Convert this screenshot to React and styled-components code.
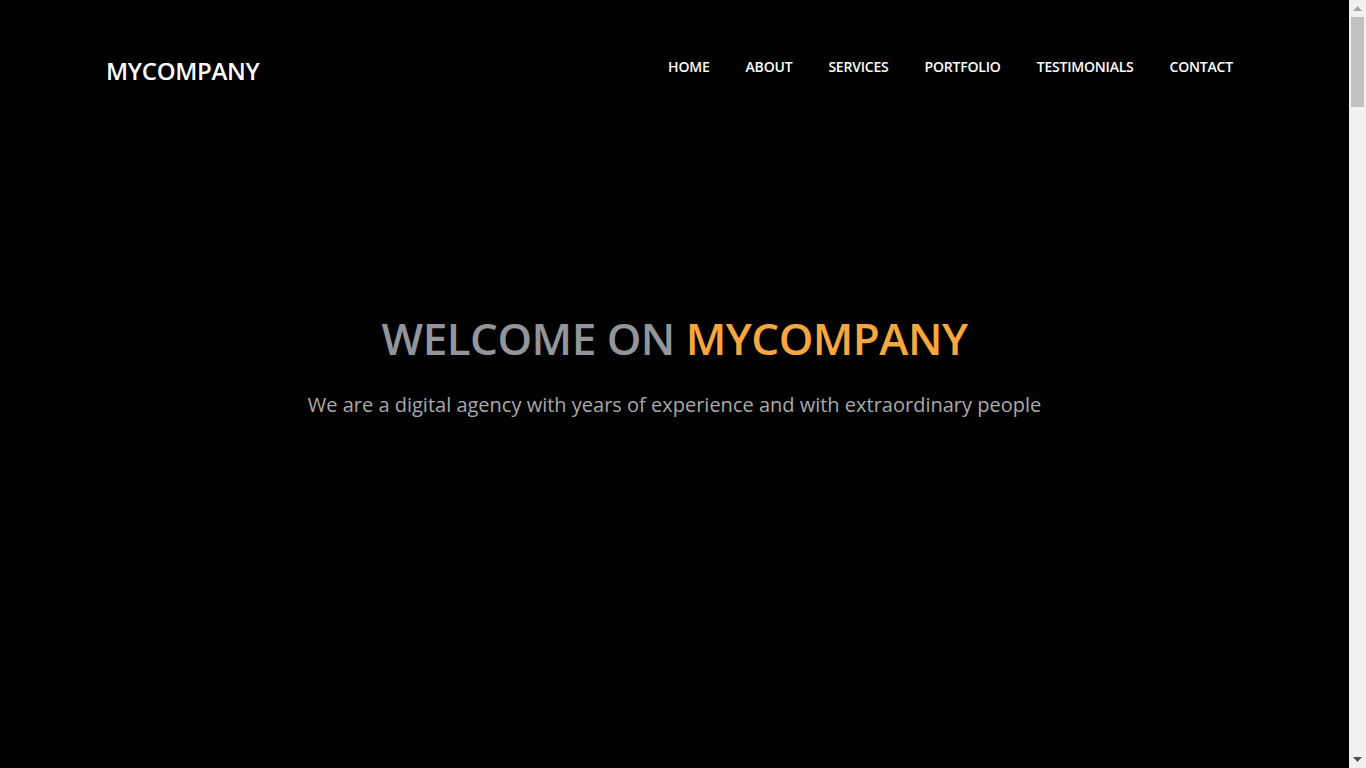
import styled, { createGlobalStyle } from "styled-components";

const GlobalStyle = createGlobalStyle`
  html, body {
    margin: 0;
    padding: 0;
    background: #000;
  }
  body {
    font-family: "Open Sans", "Liberation Sans", sans-serif;
    color: #fff;
  }
  * {
    box-sizing: border-box;
  }
`;

const navItems = [
  "Home",
  "About",
  "Services",
  "Portfolio",
  "Testimonials",
  "Contact",
];

const App = () => {
  return (
    <>
      <GlobalStyle />
      <Page>
        <Hero id="home">
          <Header>
            <Logo href="#home">MYCOMPANY</Logo>
            <Nav>
              {navItems.map((item) => (
                <NavLink key={item} href={`#${item.toLowerCase()}`}>
                  {item}
                </NavLink>
              ))}
            </Nav>
          </Header>
          <Intro>
            <Title>
              WELCOME ON <Accent>MYCOMPANY</Accent>
            </Title>
            <Lead>
              We are a digital agency with years of experience and with
              extraordinary people
            </Lead>
          </Intro>
        </Hero>
        {navItems.slice(1).map((item) => (
          <Section key={item} id={item.toLowerCase()} />
        ))}
      </Page>
      <Scrollbar aria-hidden="true">
        <ScrollArrow>
          <svg width="9" height="5" viewBox="0 0 9 5">
            <path d="M4.5 0 L9 5 L0 5 Z" fill="#a3a3a3" />
          </svg>
        </ScrollArrow>
        <Thumb />
        <Track />
        <ScrollArrow>
          <svg width="9" height="5" viewBox="0 0 9 5">
            <path d="M0 0 L9 0 L4.5 5 Z" fill="#505050" />
          </svg>
        </ScrollArrow>
      </Scrollbar>
    </>
  );
};

const Page = styled.main`
  width: 1349px;
  background: #000;
`;

const Hero = styled.section`
  height: 768px;
  display: flex;
  flex-direction: column;
`;

const Header = styled.header`
  display: flex;
  justify-content: space-between;
  align-items: flex-start;
  padding: 50px 116px 0 106px;
`;

const Logo = styled.a`
  font-size: 24px;
  font-weight: 600;
  color: #fff;
  text-decoration: none;
  letter-spacing: -0.3px;
  line-height: 42px;
`;

const Nav = styled.nav`
  display: flex;
  gap: 36px;
  padding-top: 6px;
`;

const NavLink = styled.a`
  font-size: 14px;
  font-weight: 600;
  text-transform: uppercase;
  letter-spacing: -0.2px;
  color: #fff;
  text-decoration: none;
  line-height: 22px;
`;

const Intro = styled.div`
  display: flex;
  flex-direction: column;
  align-items: center;
  text-align: center;
  padding-top: 216px;
`;

const Title = styled.h1`
  margin: 0;
  font-size: 44px;
  font-weight: 600;
  letter-spacing: -0.5px;
  color: #929599;
  line-height: 60px;
`;

const Accent = styled.span`
  color: #f7a73e;
`;

const Lead = styled.p`
  margin: 23px 0 0;
  font-size: 20px;
  font-weight: 400;
  color: #a9a9a9;
  line-height: 28px;
`;

const Section = styled.section`
  height: 1099px;
`;

const Scrollbar = styled.div`
  position: fixed;
  top: 0;
  right: 0;
  width: 17px;
  height: 100vh;
  background: #f1f1f1;
  display: flex;
  flex-direction: column;
  align-items: center;
`;

const ScrollArrow = styled.div`
  width: 17px;
  height: 17px;
  display: flex;
  align-items: center;
  justify-content: center;
  flex-shrink: 0;
`;

const Thumb = styled.div`
  width: 13px;
  height: 90px;
  background: #c1c1c1;
  flex-shrink: 0;
`;

const Track = styled.div`
  flex: 1;
`;

export default App;
